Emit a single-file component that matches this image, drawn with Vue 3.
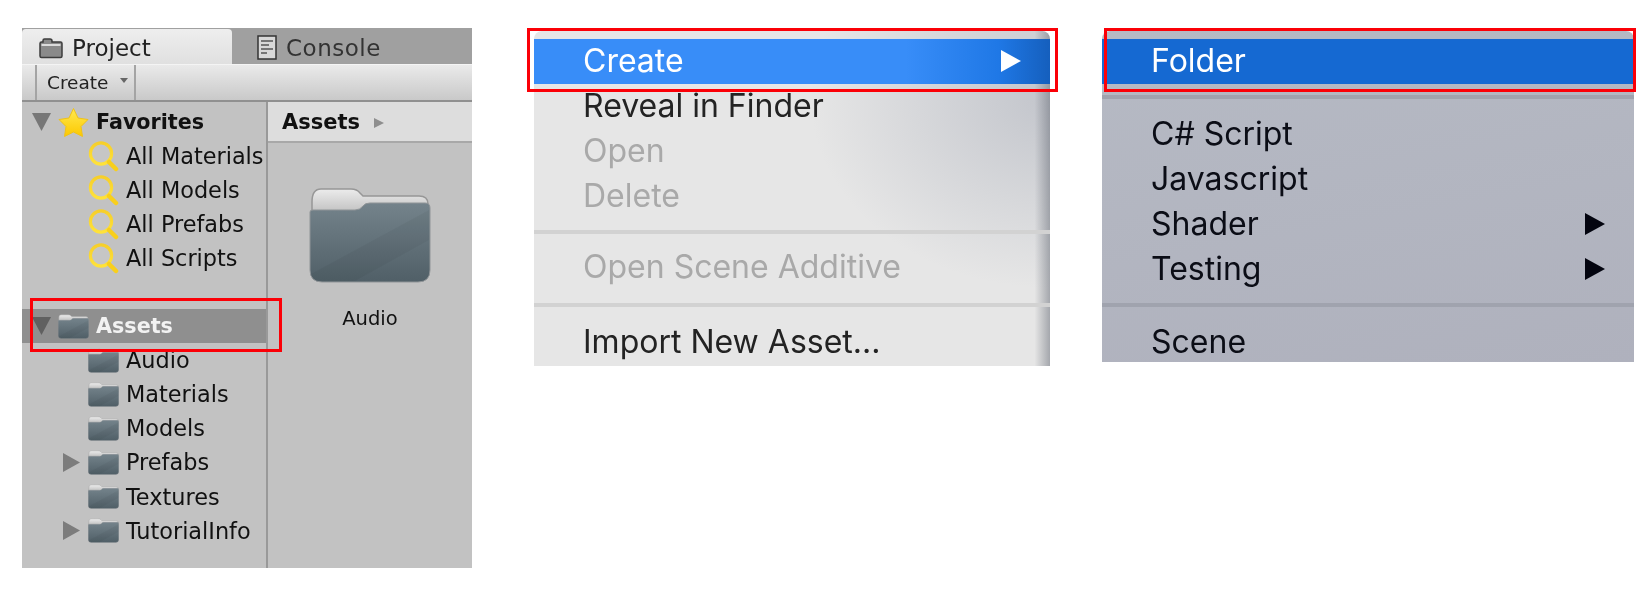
<script setup>
const favorites = ['All Materials', 'All Models', 'All Prefabs', 'All Scripts']
const assets = [
  { name: 'Audio' },
  { name: 'Materials' },
  { name: 'Models' },
  { name: 'Prefabs', arrow: true },
  { name: 'Textures' },
  { name: 'TutorialInfo', arrow: true }
]
const contextMenu = [
  { label: 'Create', active: true, sub: true },
  { label: 'Reveal in Finder' },
  { label: 'Open', disabled: true },
  { label: 'Delete', disabled: true },
  { sep: true },
  { label: 'Open Scene Additive', disabled: true },
  { sep: true },
  { label: 'Import New Asset...' }
]
const createMenu = [
  { label: 'Folder', active: true },
  { sep: true },
  { label: 'C# Script' },
  { label: 'Javascript' },
  { label: 'Shader', sub: true },
  { label: 'Testing', sub: true },
  { sep: true },
  { label: 'Scene' }
]
</script>

<template>
  <div class="page">
    <svg class="defs" aria-hidden="true">
      <defs>
        <linearGradient id="tabGrad" x1="0" y1="0" x2="0" y2="1">
          <stop offset="0" stop-color="#ececec" />
          <stop offset="1" stop-color="#a8a8a8" />
        </linearGradient>
        <linearGradient id="bodyGrad" x1="0" y1="0" x2="0" y2="1">
          <stop offset="0" stop-color="#74838b" />
          <stop offset="1" stop-color="#505f67" />
        </linearGradient>
        <linearGradient id="magGrad" x1="0" y1="0" x2="0" y2="1">
          <stop offset="0" stop-color="#f6cf2a" />
          <stop offset="1" stop-color="#ffe23a" />
        </linearGradient>
        <linearGradient id="starGrad" x1="0" y1="0" x2="0" y2="1">
          <stop offset="0" stop-color="#ffe94f" />
          <stop offset="1" stop-color="#fcc800" />
        </linearGradient>
        <symbol id="folder" viewBox="0 0 122 98">
          <path d="M3 16Q3 3 12 3H42Q48 3 51 7L54 10H110Q119 10 119 18V40H3Z" fill="url(#tabGrad)" stroke="#979797" stroke-width="1.500" />
          <path d="M1 26Q1 24 4 24H46Q51 24 54 20Q56 17 61 17H116Q121 17 121 22V84Q121 96 109 96H13Q1 96 1 84Z" fill="url(#bodyGrad)" stroke="#8f9497" stroke-width="1" />
          <path d="M2 88L120 24V54L46 95H13Q3 95 2 88Z" fill="#000" opacity=".04" />
        </symbol>
        <symbol id="loupe" viewBox="0 0 31 31">
          <circle cx="13" cy="12.500" r="10.600" fill="#fff" fill-opacity=".08" stroke="url(#magGrad)" stroke-width="3.200" />
          <path d="M21 21L28 28" stroke="#f8cf1c" stroke-width="4.500" stroke-linecap="round" />
        </symbol>
      </defs>
    </svg>

    <section class="panel">
      <header class="tabs">
        <div class="tab active">
          <svg class="tab-ico" width="24" height="21" viewBox="0 0 24 21">
            <path d="M4 4V2.500Q4 1 5.500 1H11Q13 1 13 3V4H21.500Q23 4 23 5.500V18Q23 19.500 21.500 19.500H2.500Q1 19.500 1 18V5.500Q1 4 2.500 4Z" fill="#8a8a8a" stroke="#3d3d3d" stroke-width="1.500" />
            <rect x="2.500" y="6" width="19" height="2" fill="#dcdcdc" />
          </svg>
          <span>Project</span>
        </div>
        <div class="tab">
          <svg class="tab-ico" width="20" height="25" viewBox="0 0 20 25">
            <rect x="1" y="1" width="18" height="23" fill="#d8d8d8" stroke="#333" stroke-width="1.500" />
            <path d="M4 6H16M4 10H12M4 14H16M4 18H10" stroke="#555" stroke-width="1.500" />
          </svg>
          <span>Console</span>
        </div>
      </header>
      <div class="toolbar">
        <div class="create-btn">
          <span>Create</span>
          <i class="caret"></i>
        </div>
      </div>
      <div class="content">
        <aside class="tree">
          <div class="row top">
            <svg class="arrow" width="19" height="18" viewBox="0 0 19 18"><path d="M0 0H19L9.500 18Z" fill="#777" /></svg>
            <svg class="icon" width="31" height="29" viewBox="0 0 31 29">
              <path d="M15.500 0.500L20 10L30 11.500L23 18.500L24.500 28.500L15.500 24L6.500 28.500L8 18.500L1 11.500L11 10Z" fill="url(#starGrad)" stroke="#efc21a" stroke-width="1" />
            </svg>
            <strong>Favorites</strong>
          </div>
          <div v-for="item in favorites" :key="item" class="row sub">
            <span class="arrow"></span>
            <svg class="icon" width="31" height="31"><use href="#loupe" /></svg>
            <span>{{ item }}</span>
          </div>
          <div class="row spacer"></div>
          <div class="row top selected">
            <svg class="arrow" width="19" height="18" viewBox="0 0 19 18"><path d="M0 0H19L9.500 18Z" fill="#606060" /></svg>
            <svg class="icon" width="31" height="25"><use href="#folder" /></svg>
            <strong>Assets</strong>
          </div>
          <div v-for="item in assets" :key="item.name" class="row sub">
            <svg v-if="item.arrow" class="arrow" width="19" height="19" viewBox="0 0 19 19"><path d="M1 0V19L18 9.500Z" fill="#7c7c7c" /></svg>
            <span v-else class="arrow"></span>
            <svg class="icon" width="31" height="25"><use href="#folder" /></svg>
            <span>{{ item.name }}</span>
          </div>
          <div class="marker assets-mark"></div>
        </aside>
        <main class="browser">
          <div class="crumb">
            <strong>Assets</strong>
            <i class="crumb-arrow"></i>
          </div>
          <figure class="tile">
            <svg width="122" height="98"><use href="#folder" /></svg>
            <figcaption>Audio</figcaption>
          </figure>
        </main>
      </div>
    </section>

    <section class="menu light">
      <template v-for="(item, i) in contextMenu" :key="i">
        <div v-if="item.sep" class="sep"></div>
        <div v-else class="item" :class="{ active: item.active, disabled: item.disabled }">
          <span>{{ item.label }}</span>
          <i v-if="item.sub" class="sub-arrow"></i>
        </div>
      </template>
      <div class="marker menu-mark-a"></div>
    </section>

    <section class="menu slate">
      <template v-for="(item, i) in createMenu" :key="i">
        <div v-if="item.sep" class="sep"></div>
        <div v-else class="item" :class="{ active: item.active }">
          <span>{{ item.label }}</span>
          <i v-if="item.sub" class="sub-arrow"></i>
        </div>
      </template>
      <div class="marker menu-mark-b"></div>
    </section>
  </div>
</template>

<style scoped>
.page {
  display: flex;
  align-items: flex-start;
  width: 1648px;
  height: 596px;
  box-sizing: border-box;
  padding: 28px 0 0 22px;
  background: #fff;
  overflow: hidden;
}
.defs { position: absolute; width: 0; height: 0; }

.panel {
  width: 450px;
  height: 540px;
  display: flex;
  flex-direction: column;
  flex: none;
  background: #c2c2c2;
  color: #111;
  font-family: "DejaVu Sans", sans-serif;
  filter: blur(0.45px);
}
.tabs {
  height: 36px;
  display: flex;
  flex: none;
  background: #a0a0a0;
  font-size: 23px;
  color: #222;
}
.tab {
  width: 210px;
  box-sizing: border-box;
  display: flex;
  align-items: center;
  gap: 9px;
  padding: 3px 0 0 17px;
  border-radius: 4px 4px 0 0;
}
.tab + .tab { padding-left: 25px; color: #333; letter-spacing: 0.5px; }
.tab.active { background: linear-gradient(#eeeeee, #e0e0e0); margin-top: 1px; }
.tab-ico { flex: none; }

.toolbar {
  height: 38px;
  flex: none;
  box-sizing: border-box;
  border-top: 1px solid #f4f4f4;
  border-bottom: 2px solid #909090;
  background: linear-gradient(#eaeaea, #c9c9c9);
  padding-left: 13px;
}
.create-btn {
  width: 101px;
  height: 100%;
  box-sizing: border-box;
  display: flex;
  align-items: center;
  gap: 12px;
  padding-left: 10px;
  border-left: 2px solid #a4a4a4;
  border-right: 2px solid #a4a4a4;
  font-size: 18.500px;
  color: #222;
}
.caret {
  width: 0;
  height: 0;
  border-left: 4px solid transparent;
  border-right: 4px solid transparent;
  border-top: 5px solid #666;
  margin-top: -4px;
}

.content { flex: 1; display: flex; min-height: 0; }
.tree {
  width: 246px;
  flex: none;
  box-sizing: border-box;
  padding-top: 3px;
  border-right: 2px solid #999;
  font-size: 22.400px;
  position: relative;
}
.row {
  height: 34.050px;
  display: flex;
  align-items: center;
  gap: 7px;
  white-space: nowrap;
}
.row.top { padding-left: 10px; }
.row.sub { padding-left: 40px; }
.row strong { font-weight: 700; font-size: 20.700px; }
.row.selected { background: #8f8f8f; color: #f2f2f2; }
.arrow { width: 19px; flex: none; }
.icon { flex: none; }

.browser { flex: 1; min-width: 0; }
.crumb {
  height: 38px;
  box-sizing: content-box;
  display: flex;
  align-items: center;
  gap: 14px;
  padding: 1px 0 0 14px;
  background: #dddddd;
  border-bottom: 2px solid #a8a8a8;
  font-size: 21px;
}
.crumb-arrow {
  width: 0;
  height: 0;
  border-top: 5px solid transparent;
  border-bottom: 5px solid transparent;
  border-left: 10px solid #8e8e8e;
  margin-top: 2px;
}
.tile {
  margin: 43px 0 0;
  display: flex;
  flex-direction: column;
  align-items: center;
  gap: 23px;
  font-size: 19.500px;
  color: #111;
}

.menu {
  flex: none;
  position: relative;
  box-sizing: border-box;
  margin-top: 3px;
  padding-top: 8px;
  border-radius: 8px 8px 0 0;
  font-family: Inter, "Liberation Sans", sans-serif;
  font-size: 32px;
  filter: blur(0.4px);
}
.menu.light {
  width: 516px;
  height: 335px;
  margin-left: 62px;
  color: #232323;
  background:
    linear-gradient(90deg, rgba(110,115,125,0) 97%, rgba(110,115,125,.55) 100%),
    radial-gradient(ellipse 240px 190px at 100% 20%, rgba(160,165,178,.5), rgba(160,165,178,0)),
    #e6e6e6;
}
.menu.slate {
  width: 532px;
  height: 331px;
  margin-left: 52px;
  color: #0b0d16;
  background: linear-gradient(170deg, #b6bac4, #afb1bd);
}
.item {
  height: 45px;
  box-sizing: border-box;
  display: flex;
  align-items: center;
  justify-content: space-between;
  padding: 0 29px 2px 49px;
}
.item.disabled { color: #a9a9a9; }
.item.active { color: #fff; }
.light .item.active { background: linear-gradient(90deg, #388df8 0, #388df8 72%, #1f78e6 90%, #155fbd 100%); }
.slate .item.active { background: #1569d2; }
.sub-arrow {
  width: 0;
  height: 0;
  border-top: 11px solid transparent;
  border-bottom: 11px solid transparent;
  border-left: 20px solid currentColor;
}
.slate .sub-arrow { color: #03040f; }
.light .sep {
  height: 26px;
  background: linear-gradient(#0000 11px, #d2d2d2 11px, #d2d2d2 15px, #0000 15px);
}
.light .sep + .item + .sep { height: 30px; background: linear-gradient(#0000 13px, #d2d2d2 13px, #d2d2d2 17px, #0000 17px); }
.slate .sep {
  height: 28px;
  background: linear-gradient(#0000 11px, #a0a3ae 11px, #a0a3ae 15px, #0000 15px);
}

.marker {
  position: absolute;
  box-sizing: border-box;
  border: 3.500px solid #fb0007;
  pointer-events: none;
}
.assets-mark { left: 8px; top: 196px; width: 252px; height: 54px; z-index: 2; }
.menu-mark-a { left: -7px; top: -3px; width: 531px; height: 64px; }
.menu-mark-b { left: 2px; top: -3px; width: 532px; height: 64px; }
</style>
